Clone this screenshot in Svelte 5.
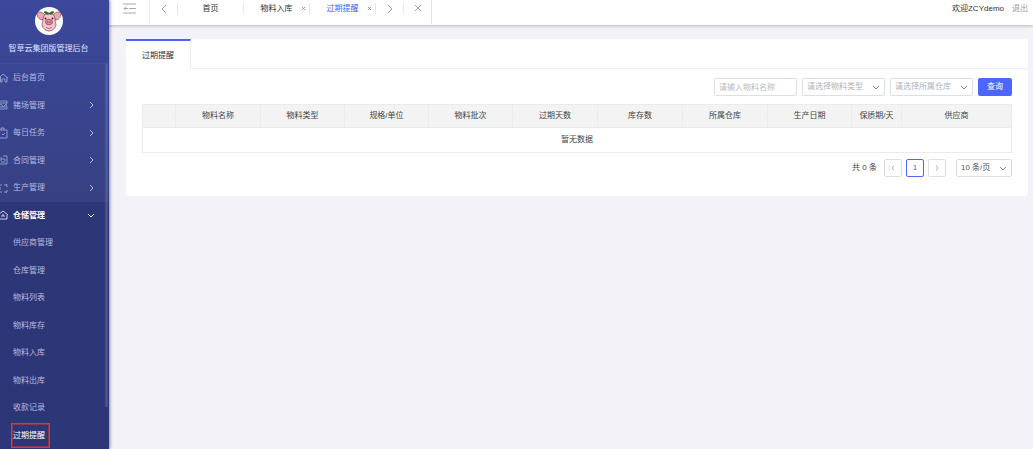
<script lang="ts">
  interface MenuItem {
    label: string;
    icon: string;
    arrow: boolean;
  }

  const menu: MenuItem[] = [
    {label: '后台首页', icon: 'M-1 6 3 2l5 4M.5 5v5H2V7h3v3h2V5', arrow: false},
    {label: '猪场管理', icon: 'M-1 2h8v2H-1M7 4l-1 2 1 2v2h-8M0 5l2 1 1 2 2-2 1-1M0 8h6', arrow: true},
    {label: '每日任务', icon: 'M-1 3h8v8h-8M1 3V1h3v2M2 7l1 1 2-2', arrow: true},
    {label: '合同管理', icon: 'M0 4h2v2H0M3 2h4v8h-8M4 4v2h2M1 8h4', arrow: true},
    {label: '生产管理', icon: 'M-1 3h3M4 3h3v2M7 8v2H4M2 10h-3M0 5v3M6 2l1 1M7 10l-1 1', arrow: true},
  ];

  const submenu = [
    '供应商管理',
    '仓库管理',
    '物料列表',
    '物料库存',
    '物料入库',
    '物料出库',
    '收款记录',
    '过期提醒',
  ];

  const columns = [
    {label: '', width: 33},
    {label: '物料名称', width: 85},
    {label: '物料类型', width: 84},
    {label: '规格/单位', width: 84},
    {label: '物料批次', width: 84},
    {label: '过期天数', width: 85},
    {label: '库存数', width: 85},
    {label: '所属仓库', width: 85},
    {label: '生产日期', width: 84},
    {label: '保质期/天', width: 50},
    {label: '供应商', width: 110},
  ];
  const total_width = columns.reduce((sum, column) => sum + column.width, 0);

  const tabs = [
    {label: '首页', closable: false},
    {label: '物料入库', closable: true},
    {label: '过期提醒', closable: true},
  ];

  let active = $state('过期提醒');
  let open = $state(true);
  let keyword = $state('');
</script>

{#snippet chevron(d: string)}
  <svg class="chevron" viewBox="0 0 8 8" aria-hidden="true"><path {d} /></svg>
{/snippet}

<div class="layout">
  <aside>
    <div class="brand">
      <svg class="logo" viewBox="0 0 28 28" aria-hidden="true">
        <circle cx="14" cy="14" r="14" fill="#fff" />
        <g stroke="#5c3a42" stroke-width="0.6">
          <path d="M10 8C8 5 4 4 2 6c0 5 3 7 6 7zM18 8c2-3 6-4 8-2 0 5-3 7-6 7z" fill="#f0a3b3" />
          <path d="M14 6c-4 0-6 3-6 7 0 2-1 3-1 5 1 4 4 6 7 6s6-2 7-6c0-2-1-3-1-5 0-4-2-7-6-7z" fill="#fac3cb" />
          <ellipse cx="14" cy="15" rx="3.5" ry="2.8" fill="#ea8798" />
          <path d="M11 20c2 2 4 2 6 0" fill="none" />
        </g>
        <path d="M14 7c-1-2-3-3-5-2 1 2 3 3 5 2 2 1 4 0 5-2-2-1-4 0-5 2z" fill="#357a2c" stroke="#244d20" stroke-width="0.5" />
        <g fill="#3a2229">
          <circle cx="10.5" cy="11.5" r="0.9" />
          <circle cx="17.5" cy="11.5" r="0.9" />
          <circle cx="12.8" cy="15" r="0.6" />
          <circle cx="15.2" cy="15" r="0.6" />
        </g>
      </svg>
      <h1>智草云集团版管理后台</h1>
    </div>

    <nav>
      {#each menu as item}
        <button class="menu_item">
          <svg class="menu_icon" viewBox="0 0 8 12" aria-hidden="true"><path d={item.icon} /></svg>
          <span>{item.label}</span>
          {#if item.arrow}
            {@render chevron('M3 1l3 3-3 3')}
          {/if}
        </button>
      {/each}
      <div class="group" class:open>
        <button class="menu_item current" aria-expanded={open} onclick={() => (open = !open)}>
          <svg class="menu_icon" viewBox="0 0 8 12" aria-hidden="true">
            <path d="M-2 6 3 2l5 4M-1 6v4h8V6M1 7h4M3 5v2" />
          </svg>
          <span>仓储管理</span>
          {@render chevron('M1 3l3 3 3-3')}
        </button>
        {#if open}
          {#each submenu as label}
            <a href="#top" class="sub_item" class:selected={label === '过期提醒'}>
              <span>{label}</span>
            </a>
          {/each}
        {/if}
      </div>
      <div class="scrollbar"></div>
    </nav>
  </aside>

  <div class="content">
    <header>
      <button class="toggle" aria-label="收起菜单">
        <svg viewBox="0 0 13 11" aria-hidden="true"><path d="M0 1h13M6 5.5h7M0 10h13M1 5.5h4M3 3.5l-2 2 2 2" /></svg>
      </button>
      <button class="arrow" aria-label="上一页">
        <svg viewBox="0 0 10 10" aria-hidden="true"><path d="M7 1 3 5l4 4" /></svg>
      </button>
      {#each tabs as tab}
        <div class="tab" class:active={tab.label === active}>
          <button class="tab_label" onclick={() => (active = tab.label)}>{tab.label}</button>
          {#if tab.closable}
            <button class="tab_close" aria-label="关闭">
              <svg viewBox="0 0 5 5" aria-hidden="true"><path d="M1 1l3 3M4 1 1 4" /></svg>
            </button>
          {/if}
        </div>
      {/each}
      <button class="arrow" aria-label="下一页">
        <svg viewBox="0 0 10 10" aria-hidden="true"><path d="M3 1l4 4-4 4" /></svg>
      </button>
      <button class="close_all" aria-label="全部关闭">
        <svg viewBox="0 0 10 10" aria-hidden="true"><path d="M2 2l6 6M8 2 2 8" /></svg>
      </button>
      <div class="user">
        <span>欢迎ZCYdemo</span>
        <a href="#logout">退出</a>
      </div>
    </header>

    <main>
      <section class="card">
        <div class="card_tabs">
          <button class="card_tab">过期提醒</button>
        </div>
        <div class="card_body">
          <form class="filters" onsubmit={(event) => event.preventDefault()}>
            <input type="text" placeholder="请输入物料名称" aria-label="物料名称" bind:value={keyword} />
            <div class="select">
              <select aria-label="物料类型"><option>请选择物料类型</option></select>
              {@render chevron('M1 3l3 3 3-3')}
            </div>
            <div class="select">
              <select aria-label="所属仓库"><option>请选择所属仓库</option></select>
              {@render chevron('M1 3l3 3 3-3')}
            </div>
            <button class="search">查询</button>
          </form>

          <table>
            <colgroup>
              {#each columns as column}
                <col style="width: {(column.width / total_width) * 100}%" />
              {/each}
            </colgroup>
            <thead>
              <tr>
                {#each columns as column}
                  <th>{column.label}</th>
                {/each}
              </tr>
            </thead>
            <tbody>
              <tr><td colspan={columns.length}>暂无数据</td></tr>
            </tbody>
          </table>

          <div class="pagination">
            <span class="total">共 0 条</span>
            <button class="page" disabled aria-label="上一页">{@render chevron('M5 2 3 4l2 2')}</button>
            <button class="page page_active">1</button>
            <button class="page" disabled aria-label="下一页">{@render chevron('M3 2l2 2-2 2')}</button>
            <div class="select page_size">
              <select aria-label="每页条数"><option>10 条/页</option></select>
              {@render chevron('M1 3l3 3 3-3')}
            </div>
          </div>
        </div>
      </section>
    </main>
  </div>
</div>

<style>
  :global(body) {
    margin: 0;
    background: #f2f2f8;
  }

  .layout {
    display: flex;
    min-height: 100vh;
    font: 8px/12px 'Liberation Sans', 'Noto Sans CJK SC', sans-serif;
    color: #454545;
  }

  .layout * {
    box-sizing: border-box;
  }

  button,
  input,
  select {
    margin: 0;
    padding: 0;
    border: none;
    background: none;
    font: inherit;
    color: inherit;
  }

  button {
    cursor: pointer;
  }

  a {
    color: inherit;
    text-decoration: none;
  }

  svg {
    display: block;
    flex: none;
    fill: none;
    stroke: currentColor;
  }

  .chevron {
    width: 8px;
    height: 8px;
  }

  aside {
    display: flex;
    flex-direction: column;
    flex: none;
    width: 109px;
    background: linear-gradient(#3c489c, #364080 50%);
    box-shadow: 1px 0 3px rgba(0, 0, 0, 0.45);
    z-index: 2;
  }

  .brand {
    display: flex;
    flex-direction: column;
    align-items: center;
    gap: 8px;
    height: 64px;
    padding: 7px 12px 0 0;
    border-bottom: 1px solid #4450a0;
    color: #dfe3ff;
  }

  .logo {
    width: 28px;
    height: 28px;
    stroke: none;
  }

  h1 {
    margin: 0;
    font-size: 8px;
    line-height: 12px;
    font-weight: 400;
    white-space: nowrap;
  }

  nav {
    position: relative;
    display: flex;
    flex-direction: column;
    flex: 1;
    color: #b4bae2;
  }

  .menu_item {
    display: flex;
    flex: 1;
    align-items: center;
    min-height: 27px;
    padding-right: 14px;
    text-align: left;
  }

  .menu_item span {
    flex: 1;
    padding: 1px 0 0 5px;
  }

  .menu_icon {
    width: 8px;
    height: 12px;
    stroke: #8f98cf;
  }

  .group {
    display: flex;
    flex-direction: column;
    background: #2d3777;
  }

  .group.open {
    flex: 9;
  }

  .current {
    color: #fff;
    font-weight: 700;
  }

  .current .menu_icon {
    stroke: #ccd1f3;
  }

  .sub_item {
    display: flex;
    flex: 1;
    align-items: center;
    min-height: 27px;
    padding-left: 13px;
  }

  .sub_item span {
    padding-top: 1px;
  }

  .selected {
    padding-left: 11px;
    color: #fff;
  }

  .selected span {
    padding: 6px 4px 5px 1px;
    border: 1px solid #f0322f;
    outline: 1px solid rgba(240, 50, 47, 0.5);
    outline-offset: -2px;
  }

  .scrollbar {
    position: absolute;
    top: 0;
    right: 1px;
    width: 3px;
    height: 89%;
    background: rgba(120, 130, 170, 0.35);
  }

  .content {
    flex: 1;
    min-width: 0;
  }

  header {
    display: flex;
    align-items: center;
    height: 25px;
    padding-bottom: 8px;
    background: #fff;
    box-shadow: 0 1px 3px rgba(0, 0, 0, 0.25);
  }

  .toggle {
    display: flex;
    align-items: center;
    justify-content: center;
    width: 41px;
    height: 24px;
    margin-bottom: -7px;
    padding-bottom: 8px;
    border-right: 1px solid #e9e9e9;
    color: #a8a8a8;
  }

  .toggle svg {
    width: 13px;
    height: 11px;
  }

  .arrow,
  .close_all {
    display: flex;
    align-items: center;
    justify-content: center;
    width: 28px;
    height: 11px;
    border-right: 1px solid #e4e4e4;
    color: #a0a0a0;
  }

  .arrow svg,
  .close_all svg {
    width: 10px;
    height: 10px;
  }

  .close_all {
    height: 24px;
    margin-bottom: -7px;
    padding-bottom: 8px;
  }

  .tab {
    display: flex;
    align-items: center;
    justify-content: center;
    position: relative;
    width: 66px;
    height: 11px;
    border-right: 1px solid #e4e4e4;
    color: #333;
  }

  .tab.active {
    color: #4a5cff;
  }

  .tab_close {
    position: absolute;
    right: 3px;
    color: #999;
  }

  .tab_close svg {
    width: 5px;
    height: 5px;
  }

  .user {
    display: flex;
    gap: 8px;
    margin-left: auto;
    padding-right: 5px;
    color: #333;
  }

  .user a {
    color: #999;
  }

  main {
    padding: 14px 5px 14px 17px;
  }

  .card {
    border-radius: 3px;
    background: #fff;
  }

  .card_tabs {
    display: flex;
    height: 30px;
    border-bottom: 1px solid #ececf0;
  }

  .card_tab {
    height: 30px;
    width: 65px;
    padding-top: 2px;
    border-top: 2px solid #4a62f5;
    border-right: 1px solid #ececf0;
    border-bottom: 1px solid #fff;
    background: #fff;
    color: #333;
  }

  .card_body {
    padding: 9px 16px 19px;
  }

  .filters {
    display: flex;
    justify-content: flex-end;
    gap: 5px;
    margin-bottom: 8px;
  }

  input,
  select {
    display: block;
    width: 83px;
    height: 18px;
    padding: 0 4px;
    border: 1px solid #dcdfe6;
    border-radius: 2px;
    background: #fff;
    color: #b0b3ba;
    appearance: none;
  }

  input::placeholder {
    color: #b8bbc2;
  }

  .select {
    position: relative;
  }

  .select .chevron {
    position: absolute;
    top: 5px;
    right: 5px;
    color: #888;
    pointer-events: none;
  }

  .search {
    width: 34px;
    height: 18px;
    border-radius: 2px;
    background: #4d66ff;
    color: #fff;
  }

  table {
    width: 100%;
    table-layout: fixed;
    border-collapse: collapse;
  }

  th,
  td {
    height: 25px;
    padding: 0;
    border: 1px solid #ebebeb;
    font-weight: 400;
    text-align: center;
  }

  th {
    height: 23px;
    background: #f3f3f3;
  }

  .pagination {
    display: flex;
    align-items: center;
    justify-content: flex-end;
    gap: 4px;
    margin-top: 6px;
  }

  .total {
    margin-right: 3px;
  }

  .page {
    display: flex;
    align-items: center;
    justify-content: center;
    width: 18px;
    height: 18px;
    border: 1px solid #dcdfe6;
    border-radius: 2px;
    color: #aaa;
  }

  .page_active {
    border-color: #4d66ff;
    color: #4d66ff;
  }

  .page_size {
    margin-left: 6px;
  }

  .page_size select {
    width: 56px;
    color: #555;
  }
</style>
